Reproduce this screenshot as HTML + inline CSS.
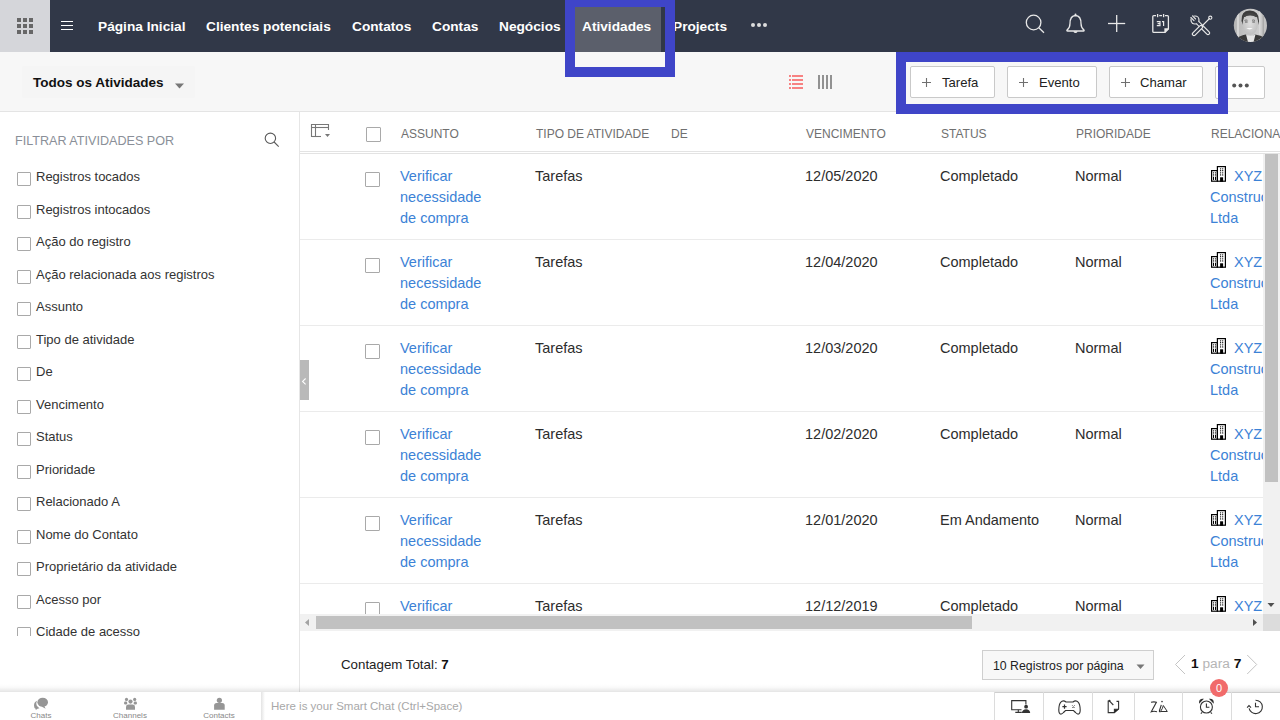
<!DOCTYPE html>
<html><head><meta charset="utf-8">
<style>
*{box-sizing:border-box;margin:0;padding:0}
html,body{width:1280px;height:720px;overflow:hidden;background:#fff;font-family:"Liberation Sans",sans-serif;position:relative}
.abs{position:absolute}
#top{left:0;top:0;width:1280px;height:52px;background:#313848}
#grid{left:0;top:0;width:50px;height:52px;background:#d5d6da}
.nav{position:absolute;top:17.8px;color:#fff;font-weight:bold;font-size:13.7px;line-height:18px;white-space:nowrap}
#activetab{left:575px;top:7px;width:86px;height:45px;background:#5b5f6b}
#sub{left:0;top:52px;width:1280px;height:60px;background:#f7f7f7;border-bottom:1px solid #e4e4e4}
.hl{position:absolute;border:10px solid #3f45c8}
.btn{position:absolute;top:66px;height:32px;background:#fff;border:1px solid #c9c9c9;border-radius:2px;font-size:13.1px;color:#222;line-height:31.5px;white-space:nowrap}
.btn .pl{position:absolute;color:#777;font-size:17px;top:0}
#side{left:0;top:112px;width:300px;height:580px;background:#fff;border-right:1px solid #e6e6e6}
.flt{position:absolute;left:36px;font-size:13px;color:#333;white-space:nowrap;line-height:16px}
.cb{position:absolute;width:14px;height:14px;border:1px solid #a9a9a9;border-radius:1px;background:#fff}
.th{position:absolute;top:127px;font-size:12px;color:#707070;white-space:nowrap;line-height:14px}
.td{position:absolute;font-size:14.5px;color:#2d2d2d;white-space:nowrap;line-height:21px}
.lk{color:#3c82d6}
.rowline{position:absolute;left:300px;width:963px;height:1px;background:#ebebeb}
</style></head><body>
<div id="top" class="abs"></div>
<div id="grid" class="abs"></div>
<svg class="abs" style="left:0;top:0" width="1280" height="52">
  <g fill="#676767">
    <rect x="17" y="18" width="4" height="4"/><rect x="23" y="18" width="4" height="4"/><rect x="29" y="18" width="4" height="4"/>
    <rect x="17" y="24" width="4" height="4"/><rect x="23" y="24" width="4" height="4"/><rect x="29" y="24" width="4" height="4"/>
    <rect x="17" y="30" width="4" height="4"/><rect x="23" y="30" width="4" height="4"/><rect x="29" y="30" width="4" height="4"/>
  </g>
  <g fill="#fff"><rect x="61" y="21" width="12" height="1"/><rect x="61" y="25" width="12" height="1"/><rect x="61" y="29" width="12" height="1"/></g>
</svg>
<div id="activetab" class="abs"></div>
<div class="nav" style="left:98px">Página Inicial</div>
<div class="nav" style="left:206px">Clientes potenciais</div>
<div class="nav" style="left:352px">Contatos</div>
<div class="nav" style="left:432px">Contas</div>
<div class="nav" style="left:499px">Negócios</div>
<div class="nav" style="left:582px">Atividades</div>
<div class="nav" style="left:673px">Projects</div>
<svg class="abs" style="left:750px;top:20.4px" width="20" height="10"><circle cx="3" cy="5" r="2" fill="#ddd"/><circle cx="9" cy="5" r="2" fill="#ddd"/><circle cx="15" cy="5" r="2" fill="#ddd"/></svg>

<!-- right icons -->
<svg class="abs" style="left:1000px;top:0" width="180" height="52" fill="none" stroke="#e8e8e8" stroke-width="1.3">
  <circle cx="33.6" cy="22.5" r="7.3"/><line x1="38.8" y1="27.7" x2="44" y2="32.8"/>
  <path d="M75.5 15.5 C71 15.8 70 19.5 70 23.5 C70 26.5 69 28.5 67 30 Q66.5 31 67.5 31 L83.5 31 Q84.5 31 84 30 C82 28.5 81 26.5 81 23.5 C81 19.5 80 15.8 75.5 15.5 Z"/>
  <circle cx="75.5" cy="14.6" r="1" fill="#e8e8e8" stroke="none"/>
  <path d="M73.8 31.3 Q75.5 33.6 77.2 31.3" fill="#e8e8e8"/>
  <line x1="116.7" y1="15" x2="116.7" y2="32"/><line x1="108" y1="23.5" x2="125.2" y2="23.5"/>
  <path d="M156 15.6 H153.8 Q152.8 15.6 152.8 16.6 V31.4 Q152.8 32.4 153.8 32.4 H165 L168.4 29 V16.6 Q168.4 15.6 167.4 15.6 H165"/><path d="M165 32.4 V29 H168.4" fill="#e8e8e8"/>
  <line x1="157.6" y1="14" x2="157.6" y2="17.2"/><line x1="163.6" y1="14" x2="163.6" y2="17.2"/><line x1="159.2" y1="15.6" x2="162" y2="15.6"/>
  <path d="M156.8 21.6 H160 V25.6 H156.8 M157.6 23.6 H160 M162 21.6 H163.6 V26.1" stroke-width="1.2"/>
</svg>
<svg class="abs" style="left:1188px;top:13px" width="26" height="24" viewBox="0 0 26 24">
  <g stroke-linecap="round">
    <line x1="9" y1="9" x2="20" y2="20" stroke="#e8e8e8" stroke-width="4.4"/>
    <line x1="9" y1="9" x2="20" y2="20" stroke="#313848" stroke-width="2"/>
    <circle cx="7" cy="7" r="4.6" fill="#e8e8e8"/>
    <circle cx="7" cy="7" r="3.4" fill="#313848"/>
    <path d="M2 4.5 L4.5 2 L8.5 6 L6 8.5Z" fill="#313848"/>
    <path d="M2.9 4.5 L6 7.6 M4.5 2.9 L7.6 6" stroke="#e8e8e8" stroke-width="1.1"/>
    <line x1="9.5" y1="9.5" x2="12" y2="12" stroke="#313848" stroke-width="2"/>
    <line x1="13" y1="14" x2="6" y2="21" stroke="#e8e8e8" stroke-width="4.4"/>
    <line x1="13" y1="14" x2="6" y2="21" stroke="#313848" stroke-width="2"/>
    <line x1="14" y1="13" x2="21.5" y2="5.5" stroke="#e8e8e8" stroke-width="1.1"/>
    <circle cx="22.3" cy="4.7" r="1.6" fill="none" stroke="#e8e8e8" stroke-width="1.1"/>
  </g>
</svg>

<svg class="abs" style="left:1233px;top:8px" width="36" height="36">
  <defs><clipPath id="av"><circle cx="17.4" cy="17.45" r="16.6"/></clipPath>
  <linearGradient id="bg" x1="0" x2="1"><stop offset="0" stop-color="#b4b4b4"/><stop offset=".3" stop-color="#c2c2c2"/><stop offset=".7" stop-color="#cdcdcd"/><stop offset="1" stop-color="#bcbcbc"/></linearGradient>
  <radialGradient id="fc" cx=".5" cy=".45" r=".6"><stop offset="0" stop-color="#dedede"/><stop offset="1" stop-color="#bdbdbd"/></radialGradient></defs>
  <g clip-path="url(#av)">
    <rect width="36" height="36" fill="url(#bg)"/>
    <rect x="4" y="0" width="2" height="36" fill="#d5d5d5"/>
    <rect x="26" y="0" width="1.5" height="36" fill="#d8d8d8"/>
    <rect x="29.5" y="0" width="1.5" height="36" fill="#a9a9a9"/>
    <path d="M8.5 13 Q8 2 17 2.5 Q26 2.5 26 13 L26 17 Q24.5 11 24 9 Q18 7.5 11 9 Q10 12 10 17Z" fill="#3c3c3c"/>
    <ellipse cx="17.2" cy="16.5" rx="7.6" ry="10.2" fill="url(#fc)"/>
    <path d="M10 9.5 Q17 5.5 24.5 9.5 Q23 5 17 5 Q11 5 10 9.5Z" fill="#444"/>
    <path d="M11.5 12.5 Q13 11.5 14.5 12.3 M19 12.3 Q20.5 11.5 22 12.5" stroke="#6a6a6a" stroke-width="0.9" fill="none"/>
    <path d="M12 14 h2.6 M19.3 14 h2.6" stroke="#5a5a5a" stroke-width="1" fill="none"/>
    <path d="M13.3 20 Q16.6 22.8 19.8 20Z" fill="#fafafa"/>
    <path d="M0 36 L2 31 Q8 27 13 26.5 L17.5 30 L22 26.5 Q28 27 32 30 L36 36Z" fill="#3a3a3a"/>
    <path d="M13 26.5 L15.5 36 H20 L22.5 26.5 Q17.5 29 13 26.5Z" fill="#e6e6e6"/>
  </g>
</svg>
<!-- sub header -->
<div id="sub" class="abs"></div>
<div class="abs" style="left:22px;top:66px;width:173px;height:32px;background:#f5f5f5;border-radius:3px"></div>
<div class="abs" style="left:33px;top:74.7px;font-size:13.5px;font-weight:bold;color:#111;white-space:nowrap;line-height:16px">Todos os Atividades</div>
<svg class="abs" style="left:174px;top:82.5px" width="11" height="7"><path d="M1 0.5 H10 L5.5 5.5Z" fill="#777"/></svg>
<svg class="abs" style="left:780px;top:70px" width="60" height="24">
  <g fill="#f78282"><rect x="9" y="5" width="2" height="2"/><rect x="12" y="5" width="11" height="2"/>
  <rect x="9" y="9" width="2" height="2"/><rect x="12" y="9" width="11" height="2"/>
  <rect x="9" y="13" width="2" height="2"/><rect x="12" y="13" width="11" height="2"/>
  <rect x="9" y="17" width="2" height="2"/><rect x="12" y="17" width="11" height="2"/></g>
  <g fill="#929292"><rect x="38" y="5" width="2" height="14"/><rect x="42" y="5" width="2" height="14"/><rect x="46" y="5" width="2" height="14"/><rect x="50" y="5" width="2" height="14"/></g>
</svg>
<div class="btn" style="left:910px;width:85px"><svg style="position:absolute;left:10px;top:10px" width="11" height="11"><path d="M5.5 1 V10 M1 5.5 H10" stroke="#6f6f6f" stroke-width="1.1"/></svg><span style="position:absolute;left:31px">Tarefa</span></div>
<div class="btn" style="left:1007px;width:90px"><svg style="position:absolute;left:10px;top:10px" width="11" height="11"><path d="M5.5 1 V10 M1 5.5 H10" stroke="#6f6f6f" stroke-width="1.1"/></svg><span style="position:absolute;left:31px">Evento</span></div>
<div class="btn" style="left:1109px;width:94px"><svg style="position:absolute;left:10px;top:10px" width="11" height="11"><path d="M5.5 1 V10 M1 5.5 H10" stroke="#6f6f6f" stroke-width="1.1"/></svg><span style="position:absolute;left:30px">Chamar</span></div>
<div class="btn" style="left:1215px;width:50px;height:33px"><svg style="position:absolute;left:16px;top:16px" width="18" height="5"><circle cx="2.2" cy="2.5" r="2" fill="#555"/><circle cx="8.5" cy="2.5" r="2" fill="#555"/><circle cx="14.8" cy="2.5" r="2" fill="#555"/></svg></div>
<div class="hl" style="left:565px;top:0;width:110px;height:77px;border-top:7px solid #3f45c8;border-bottom-width:10px"></div>
<div class="hl" style="left:896px;top:52px;width:332px;height:62px"></div>

<!-- sidebar -->
<div id="side" class="abs"></div>
<div class="abs" style="left:15px;top:133.6px;font-size:12.6px;color:#8a8f98;white-space:nowrap;line-height:14px">FILTRAR ATIVIDADES POR</div>
<svg class="abs" style="left:262px;top:131px" width="20" height="18" fill="none" stroke="#5a5a5a" stroke-width="1.1"><circle cx="8.4" cy="7.3" r="5.2"/><line x1="12.1" y1="11" x2="16.7" y2="15.6"/></svg>
<div id="filters" class="abs" style="left:0;top:150px;width:299px;height:486px;overflow:hidden">
<div class="cb" style="left:17px;top:22.0px"></div><div class="flt" style="top:19.0px">Registros tocados</div>
<div class="cb" style="left:17px;top:54.5px"></div><div class="flt" style="top:51.5px">Registros intocados</div>
<div class="cb" style="left:17px;top:87.0px"></div><div class="flt" style="top:84.0px">Ação do registro</div>
<div class="cb" style="left:17px;top:119.5px"></div><div class="flt" style="top:116.5px">Ação relacionada aos registros</div>
<div class="cb" style="left:17px;top:152.0px"></div><div class="flt" style="top:149.0px">Assunto</div>
<div class="cb" style="left:17px;top:184.5px"></div><div class="flt" style="top:181.5px">Tipo de atividade</div>
<div class="cb" style="left:17px;top:217.0px"></div><div class="flt" style="top:214.0px">De</div>
<div class="cb" style="left:17px;top:249.5px"></div><div class="flt" style="top:246.5px">Vencimento</div>
<div class="cb" style="left:17px;top:282.0px"></div><div class="flt" style="top:279.0px">Status</div>
<div class="cb" style="left:17px;top:314.5px"></div><div class="flt" style="top:311.5px">Prioridade</div>
<div class="cb" style="left:17px;top:347.0px"></div><div class="flt" style="top:344.0px">Relacionado A</div>
<div class="cb" style="left:17px;top:379.5px"></div><div class="flt" style="top:376.5px">Nome do Contato</div>
<div class="cb" style="left:17px;top:412.0px"></div><div class="flt" style="top:409.0px">Proprietário da atividade</div>
<div class="cb" style="left:17px;top:444.5px"></div><div class="flt" style="top:441.5px">Acesso por</div>
<div class="cb" style="left:17px;top:477.0px"></div><div class="flt" style="top:474.0px">Cidade de acesso</div>
</div>

<!-- table -->
<svg class="abs" style="left:300px;top:112px" width="40" height="30" fill="none" stroke="#777" stroke-width="1.1">
  <path d="M11.5 25 V12.5 H28.5 V18"/><path d="M11.5 15.5 H28.5"/><path d="M15.5 12.5 V25"/><path d="M11.5 24.5 H21"/>
  <path d="M25 22 H30 L27.5 25Z" fill="#777" stroke="none"/>
</svg>
<div class="cb" style="left:366px;top:127px;width:15px;height:15px"></div>
<div class="th" style="left:401px">ASSUNTO</div>
<div class="th" style="left:536px">TIPO DE ATIVIDADE</div>
<div class="th" style="left:671px">DE</div>
<div class="th" style="left:806px">VENCIMENTO</div>
<div class="th" style="left:941px">STATUS</div>
<div class="th" style="left:1076px">PRIORIDADE</div>
<div class="th" style="left:1211px">RELACIONADO A</div>
<div class="rowline" style="top:151px;width:980px;background:#e3e3e3"></div>
<div class="rowline" style="top:153px;width:980px;background:#e3e3e3"></div>
<div id="rows" class="abs" style="left:300px;top:154px;width:963px;height:460px;overflow:hidden">
<div class="cb" style="left:65px;top:18px;width:15px;height:15px"></div>
<div class="td lk" style="left:100px;top:12px">Verificar<br>necessidade<br>de compra</div>
<div class="td" style="left:235px;top:12px">Tarefas</div>
<div class="td" style="left:505px;top:12px">12/05/2020</div>
<div class="td" style="left:640px;top:12px">Completado</div>
<div class="td" style="left:775px;top:12px">Normal</div>
<svg class="abs" style="left:911px;top:12px" width="16" height="17" viewBox="0 0 16 17"><g stroke="#000" stroke-width="1.2" fill="#fff"><rect x="0.6" y="4.6" width="5.8" height="10.6"/><rect x="6.4" y="0.6" width="8" height="14.6"/></g><g fill="#000"><circle cx="9.6" cy="2.8" r=".65"/><circle cx="11.7" cy="2.8" r=".65"/><circle cx="9.6" cy="4.7" r=".65"/><circle cx="11.7" cy="4.7" r=".65"/><circle cx="9.6" cy="6.8" r=".65"/><circle cx="11.7" cy="6.8" r=".65"/><circle cx="9.6" cy="8.9" r=".65"/><circle cx="11.7" cy="8.9" r=".65"/><rect x="9.1" y="11.3" width="3" height="4.5"/><circle cx="2.5" cy="6.8" r=".65"/><circle cx="4.5" cy="6.8" r=".65"/><circle cx="2.5" cy="8.9" r=".65"/><circle cx="4.5" cy="8.9" r=".65"/><rect x="2" y="10.5" width="1" height="3.4" rx=".5"/><rect x="4" y="10.5" width="1" height="3.4" rx=".5"/></g></svg>
<div class="td lk" style="left:910px;top:12px;width:53px;overflow:hidden"><span style="padding-left:24px">XYZ</span><br>Construções<br>Ltda</div>
<div class="rowline" style="left:0;top:85px;width:963px"></div>
<div class="cb" style="left:65px;top:104px;width:15px;height:15px"></div>
<div class="td lk" style="left:100px;top:98px">Verificar<br>necessidade<br>de compra</div>
<div class="td" style="left:235px;top:98px">Tarefas</div>
<div class="td" style="left:505px;top:98px">12/04/2020</div>
<div class="td" style="left:640px;top:98px">Completado</div>
<div class="td" style="left:775px;top:98px">Normal</div>
<svg class="abs" style="left:911px;top:98px" width="16" height="17" viewBox="0 0 16 17"><g stroke="#000" stroke-width="1.2" fill="#fff"><rect x="0.6" y="4.6" width="5.8" height="10.6"/><rect x="6.4" y="0.6" width="8" height="14.6"/></g><g fill="#000"><circle cx="9.6" cy="2.8" r=".65"/><circle cx="11.7" cy="2.8" r=".65"/><circle cx="9.6" cy="4.7" r=".65"/><circle cx="11.7" cy="4.7" r=".65"/><circle cx="9.6" cy="6.8" r=".65"/><circle cx="11.7" cy="6.8" r=".65"/><circle cx="9.6" cy="8.9" r=".65"/><circle cx="11.7" cy="8.9" r=".65"/><rect x="9.1" y="11.3" width="3" height="4.5"/><circle cx="2.5" cy="6.8" r=".65"/><circle cx="4.5" cy="6.8" r=".65"/><circle cx="2.5" cy="8.9" r=".65"/><circle cx="4.5" cy="8.9" r=".65"/><rect x="2" y="10.5" width="1" height="3.4" rx=".5"/><rect x="4" y="10.5" width="1" height="3.4" rx=".5"/></g></svg>
<div class="td lk" style="left:910px;top:98px;width:53px;overflow:hidden"><span style="padding-left:24px">XYZ</span><br>Construções<br>Ltda</div>
<div class="rowline" style="left:0;top:171px;width:963px"></div>
<div class="cb" style="left:65px;top:190px;width:15px;height:15px"></div>
<div class="td lk" style="left:100px;top:184px">Verificar<br>necessidade<br>de compra</div>
<div class="td" style="left:235px;top:184px">Tarefas</div>
<div class="td" style="left:505px;top:184px">12/03/2020</div>
<div class="td" style="left:640px;top:184px">Completado</div>
<div class="td" style="left:775px;top:184px">Normal</div>
<svg class="abs" style="left:911px;top:184px" width="16" height="17" viewBox="0 0 16 17"><g stroke="#000" stroke-width="1.2" fill="#fff"><rect x="0.6" y="4.6" width="5.8" height="10.6"/><rect x="6.4" y="0.6" width="8" height="14.6"/></g><g fill="#000"><circle cx="9.6" cy="2.8" r=".65"/><circle cx="11.7" cy="2.8" r=".65"/><circle cx="9.6" cy="4.7" r=".65"/><circle cx="11.7" cy="4.7" r=".65"/><circle cx="9.6" cy="6.8" r=".65"/><circle cx="11.7" cy="6.8" r=".65"/><circle cx="9.6" cy="8.9" r=".65"/><circle cx="11.7" cy="8.9" r=".65"/><rect x="9.1" y="11.3" width="3" height="4.5"/><circle cx="2.5" cy="6.8" r=".65"/><circle cx="4.5" cy="6.8" r=".65"/><circle cx="2.5" cy="8.9" r=".65"/><circle cx="4.5" cy="8.9" r=".65"/><rect x="2" y="10.5" width="1" height="3.4" rx=".5"/><rect x="4" y="10.5" width="1" height="3.4" rx=".5"/></g></svg>
<div class="td lk" style="left:910px;top:184px;width:53px;overflow:hidden"><span style="padding-left:24px">XYZ</span><br>Construções<br>Ltda</div>
<div class="rowline" style="left:0;top:257px;width:963px"></div>
<div class="cb" style="left:65px;top:276px;width:15px;height:15px"></div>
<div class="td lk" style="left:100px;top:270px">Verificar<br>necessidade<br>de compra</div>
<div class="td" style="left:235px;top:270px">Tarefas</div>
<div class="td" style="left:505px;top:270px">12/02/2020</div>
<div class="td" style="left:640px;top:270px">Completado</div>
<div class="td" style="left:775px;top:270px">Normal</div>
<svg class="abs" style="left:911px;top:270px" width="16" height="17" viewBox="0 0 16 17"><g stroke="#000" stroke-width="1.2" fill="#fff"><rect x="0.6" y="4.6" width="5.8" height="10.6"/><rect x="6.4" y="0.6" width="8" height="14.6"/></g><g fill="#000"><circle cx="9.6" cy="2.8" r=".65"/><circle cx="11.7" cy="2.8" r=".65"/><circle cx="9.6" cy="4.7" r=".65"/><circle cx="11.7" cy="4.7" r=".65"/><circle cx="9.6" cy="6.8" r=".65"/><circle cx="11.7" cy="6.8" r=".65"/><circle cx="9.6" cy="8.9" r=".65"/><circle cx="11.7" cy="8.9" r=".65"/><rect x="9.1" y="11.3" width="3" height="4.5"/><circle cx="2.5" cy="6.8" r=".65"/><circle cx="4.5" cy="6.8" r=".65"/><circle cx="2.5" cy="8.9" r=".65"/><circle cx="4.5" cy="8.9" r=".65"/><rect x="2" y="10.5" width="1" height="3.4" rx=".5"/><rect x="4" y="10.5" width="1" height="3.4" rx=".5"/></g></svg>
<div class="td lk" style="left:910px;top:270px;width:53px;overflow:hidden"><span style="padding-left:24px">XYZ</span><br>Construções<br>Ltda</div>
<div class="rowline" style="left:0;top:343px;width:963px"></div>
<div class="cb" style="left:65px;top:362px;width:15px;height:15px"></div>
<div class="td lk" style="left:100px;top:356px">Verificar<br>necessidade<br>de compra</div>
<div class="td" style="left:235px;top:356px">Tarefas</div>
<div class="td" style="left:505px;top:356px">12/01/2020</div>
<div class="td" style="left:640px;top:356px">Em Andamento</div>
<div class="td" style="left:775px;top:356px">Normal</div>
<svg class="abs" style="left:911px;top:356px" width="16" height="17" viewBox="0 0 16 17"><g stroke="#000" stroke-width="1.2" fill="#fff"><rect x="0.6" y="4.6" width="5.8" height="10.6"/><rect x="6.4" y="0.6" width="8" height="14.6"/></g><g fill="#000"><circle cx="9.6" cy="2.8" r=".65"/><circle cx="11.7" cy="2.8" r=".65"/><circle cx="9.6" cy="4.7" r=".65"/><circle cx="11.7" cy="4.7" r=".65"/><circle cx="9.6" cy="6.8" r=".65"/><circle cx="11.7" cy="6.8" r=".65"/><circle cx="9.6" cy="8.9" r=".65"/><circle cx="11.7" cy="8.9" r=".65"/><rect x="9.1" y="11.3" width="3" height="4.5"/><circle cx="2.5" cy="6.8" r=".65"/><circle cx="4.5" cy="6.8" r=".65"/><circle cx="2.5" cy="8.9" r=".65"/><circle cx="4.5" cy="8.9" r=".65"/><rect x="2" y="10.5" width="1" height="3.4" rx=".5"/><rect x="4" y="10.5" width="1" height="3.4" rx=".5"/></g></svg>
<div class="td lk" style="left:910px;top:356px;width:53px;overflow:hidden"><span style="padding-left:24px">XYZ</span><br>Construções<br>Ltda</div>
<div class="rowline" style="left:0;top:429px;width:963px"></div>
<div class="cb" style="left:65px;top:448px;width:15px;height:15px"></div>
<div class="td lk" style="left:100px;top:442px">Verificar<br>necessidade<br>de compra</div>
<div class="td" style="left:235px;top:442px">Tarefas</div>
<div class="td" style="left:505px;top:442px">12/12/2019</div>
<div class="td" style="left:640px;top:442px">Completado</div>
<div class="td" style="left:775px;top:442px">Normal</div>
<svg class="abs" style="left:911px;top:442px" width="16" height="17" viewBox="0 0 16 17"><g stroke="#000" stroke-width="1.2" fill="#fff"><rect x="0.6" y="4.6" width="5.8" height="10.6"/><rect x="6.4" y="0.6" width="8" height="14.6"/></g><g fill="#000"><circle cx="9.6" cy="2.8" r=".65"/><circle cx="11.7" cy="2.8" r=".65"/><circle cx="9.6" cy="4.7" r=".65"/><circle cx="11.7" cy="4.7" r=".65"/><circle cx="9.6" cy="6.8" r=".65"/><circle cx="11.7" cy="6.8" r=".65"/><circle cx="9.6" cy="8.9" r=".65"/><circle cx="11.7" cy="8.9" r=".65"/><rect x="9.1" y="11.3" width="3" height="4.5"/><circle cx="2.5" cy="6.8" r=".65"/><circle cx="4.5" cy="6.8" r=".65"/><circle cx="2.5" cy="8.9" r=".65"/><circle cx="4.5" cy="8.9" r=".65"/><rect x="2" y="10.5" width="1" height="3.4" rx=".5"/><rect x="4" y="10.5" width="1" height="3.4" rx=".5"/></g></svg>
<div class="td lk" style="left:910px;top:442px;width:53px;overflow:hidden"><span style="padding-left:24px">XYZ</span><br>Construções<br>Ltda</div>
</div>


<!-- collapse tab -->
<div class="abs" style="left:300px;top:360px;width:9px;height:40px;background:#b9b9b9"></div>
<svg class="abs" style="left:300px;top:360px" width="9" height="40"><path d="M5.6 18.5 L2.6 21.4 L5.6 24.3" fill="none" stroke="#fff" stroke-width="1.1"/></svg>

<!-- vertical scrollbar -->
<div class="abs" style="left:1263px;top:154px;width:17px;height:460px;background:#f1f1f1"></div>
<div class="abs" style="left:1265px;top:154px;width:13px;height:328px;background:#c1c1c1"></div>
<svg class="abs" style="left:1263px;top:598px" width="17" height="16"><path d="M4.5 5 H11.5 L8 9Z" fill="#505050"/></svg>
<!-- horizontal scrollbar -->
<div class="abs" style="left:300px;top:614px;width:963px;height:17px;background:#f1f1f1"></div>
<div class="abs" style="left:316px;top:616px;width:656px;height:13px;background:#c1c1c1"></div>
<div class="abs" style="left:1263px;top:614px;width:17px;height:17px;background:#dcdcdc"></div>
<svg class="abs" style="left:300px;top:614px" width="17" height="17"><path d="M9 5 V12 L5 8.5Z" fill="#a3a3a3"/></svg>
<svg class="abs" style="left:1246px;top:614px" width="17" height="17"><path d="M7 5 V12 L11 8.5Z" fill="#505050"/></svg>

<!-- footer count / pagination -->
<div class="abs" style="left:341px;top:657px;font-size:13.3px;color:#222;white-space:nowrap;line-height:16px">Contagem Total: <b style="font-weight:bold;color:#111">7</b></div>
<div class="abs" style="left:982px;top:650px;width:172px;height:30px;background:#f8f8f8;border:1px solid #cfcfcf"></div>
<div class="abs" style="left:993px;top:659px;font-size:12.3px;color:#222;white-space:nowrap;line-height:15px">10 Registros por página</div>
<svg class="abs" style="left:1135px;top:664px" width="11" height="7"><path d="M1.5 0.5 H9.5 L5.5 5Z" fill="#777"/></svg>
<svg class="abs" style="left:1172px;top:654px" width="90" height="22" fill="none" stroke="#c4c4c4" stroke-width="1">
  <path d="M13 1 L3.5 10.5 L13 20"/><path d="M75.2 1 L84.7 10.5 L75.2 20"/>
</svg>
<div class="abs" style="left:1191px;top:655.5px;font-size:13.7px;white-space:nowrap;line-height:16px;color:#b5b5b5"><b style="color:#111">1</b> para <b style="color:#111">7</b></div>

<!-- bottom bar -->
<div class="abs" style="left:0;top:684px;width:1280px;height:8px;background:linear-gradient(rgba(0,0,0,0),rgba(0,0,0,0.02) 40%,rgba(0,0,0,0.1))"></div>
<div class="abs" style="left:0;top:692px;width:1280px;height:28px;background:#fff"></div>
<div class="abs" style="left:261px;top:692px;width:4px;height:28px;background:linear-gradient(90deg,#e3e3e3,#fff)"></div>
<svg class="abs" style="left:0;top:692px" width="262" height="28">
  <g fill="#969696">
    <path d="M37.2 8.8 Q34 9.8 34 13.5 Q34 16 35.6 16.8 L35.8 18 Q37.5 16.6 39.5 16.3 L38.3 15.3 Q36.3 14 36.3 11.8 Q36.3 10 37.2 8.8Z"/>
    <ellipse cx="42.7" cy="10.3" rx="5.3" ry="4.5"/>
    <path d="M44 13.5 L45.6 16.7 L41.5 14.6Z"/>
    <circle cx="126.5" cy="7.4" r="1.6"/><circle cx="134.7" cy="7.4" r="1.6"/><circle cx="130.5" cy="9.6" r="2.1"/>
    <rect x="124.1" y="9.6" width="3.1" height="2.8" rx="1.2"/><rect x="133.7" y="9.6" width="3.2" height="2.8" rx="1.2"/>
    <path d="M126 17.8 V15 Q126 12.6 128.5 12.6 H132.5 Q135 12.6 135 15 V17.8Z"/>
    <circle cx="219.4" cy="8.3" r="2.6"/>
    <path d="M214.1 17.8 V13.5 Q214.1 11 216.6 11 H222.2 Q224.7 11 224.7 13.5 V17.8Z"/>
  </g>
  <g font-family="Liberation Sans" font-size="8" fill="#888" text-anchor="middle">
    <text x="41" y="26">Chats</text><text x="130" y="26">Channels</text><text x="219" y="26">Contacts</text>
  </g>
</svg>
<div class="abs" style="left:271px;top:699px;font-size:11.5px;color:#a8a8a8;white-space:nowrap;line-height:14px">Here is your Smart Chat (Ctrl+Space)</div>
<div class="abs" style="left:994px;top:692px;width:286px;height:1px;background:#cfcfcf"></div>
<div class="abs" style="left:994px;top:692px;width:1px;height:28px;background:#dcdcdc"></div>
<div class="abs" style="left:1043px;top:692px;width:1px;height:28px;background:#dcdcdc"></div>
<div class="abs" style="left:1092px;top:692px;width:1px;height:28px;background:#dcdcdc"></div>
<div class="abs" style="left:1134px;top:692px;width:1px;height:28px;background:#dcdcdc"></div>
<div class="abs" style="left:1182px;top:692px;width:1px;height:28px;background:#dcdcdc"></div>
<div class="abs" style="left:1231px;top:692px;width:1px;height:28px;background:#dcdcdc"></div>
<svg class="abs" style="left:994px;top:692px" width="286" height="28" fill="none" stroke="#333" stroke-width="1.1">
  <!-- monitor: screen coords minus 994 -->
  <path d="M31.9 12.6 V8.6 H17.7 V17.8 H27.5"/>
  <path d="M24.3 17.8 V20.3 M21.3 20.4 H27.8"/>
  <circle cx="32.1" cy="14.7" r="1.9" fill="#333" stroke="none"/>
  <path d="M27.8 20.9 Q28.5 17.3 32.1 17.3 Q35.7 17.3 36.2 20.9Z" fill="#333" stroke="none"/>
  <!-- gamepad -->
  <path d="M68 9.2 Q70 8.3 72 10 H79 Q81 8.3 83 9.2 Q85.5 10.5 86 15 Q86.7 20.5 85 21.8 Q83.5 22.8 81.5 20.5 L79.5 18.5 H71.5 L69.5 20.5 Q67.5 22.8 66 21.8 Q64.3 20.5 65 15 Q65.5 10.5 68 9.2Z"/>
  <path d="M70.5 12.6 V16.8 M68.4 14.7 H72.6" stroke-width="1.2"/>
  <path d="M78.3 13.4 l.9 .9 M80.6 13.4 l-.9 .9 M78.3 16 l.9 -.9 M80.6 16 l-.9 -.9" stroke-width=".9"/>
  <!-- note -->
  <path d="M115.5 9 H114.2 V20.6 H120.4 L124.6 17 V9.4 H122.5"/>
  <path d="M120.4 20.6 V17.2 H124.6" fill="#222"/>
  <circle cx="115.5" cy="8.9" r="1.1" fill="#333" stroke="none"/>
  <path d="M115.8 9.3 L119.3 13"/>
  <!-- zia --><g transform="translate(6,0)">
  <path d="M151 10.2 Q154.5 9.5 156.4 10.3 L151.3 19.8 Q154 18.8 157 19.8"/>
  <circle cx="162" cy="9.6" r=".8" fill="#333" stroke="none"/>
  <path d="M161.3 12.8 L159.5 18.5 Q159 20 160.5 19.6"/>
  <path d="M163.3 13.5 L167.3 19.5 H160.5 Q163 16 163.3 13.5Z" stroke-width="1"/>
  </g>
  <!-- alarm -->
  <circle cx="212.4" cy="15" r="6"/>
  <path d="M212.4 11.6 V15.2 H215.4"/>
  <path d="M205.6 10.4 Q205.6 7.4 208.6 7.4Z M219.2 10.4 Q219.2 7.4 216.2 7.4Z" fill="#222"/>
  <path d="M208.2 20.4 L206.8 21.7 M216.6 20.4 L218 21.7"/>
  <!-- history --><g transform="translate(6.8,0)">
  <path d="M254.7 8.2 A6.7 6.7 0 1 1 248.3 16.3"/>
  <path d="M254.7 10.8 V14.8 H258.2"/>
  <path d="M246.3 15.6 L248.2 13.6 L250.2 15.6" stroke-width="1.1"/>
</g>
</svg>
<div class="abs" style="left:1210px;top:679px;width:18px;height:18px;border-radius:50%;background:#f16b6b;color:#fff;font-size:11px;line-height:18px;text-align:center">0</div>
</body></html>
